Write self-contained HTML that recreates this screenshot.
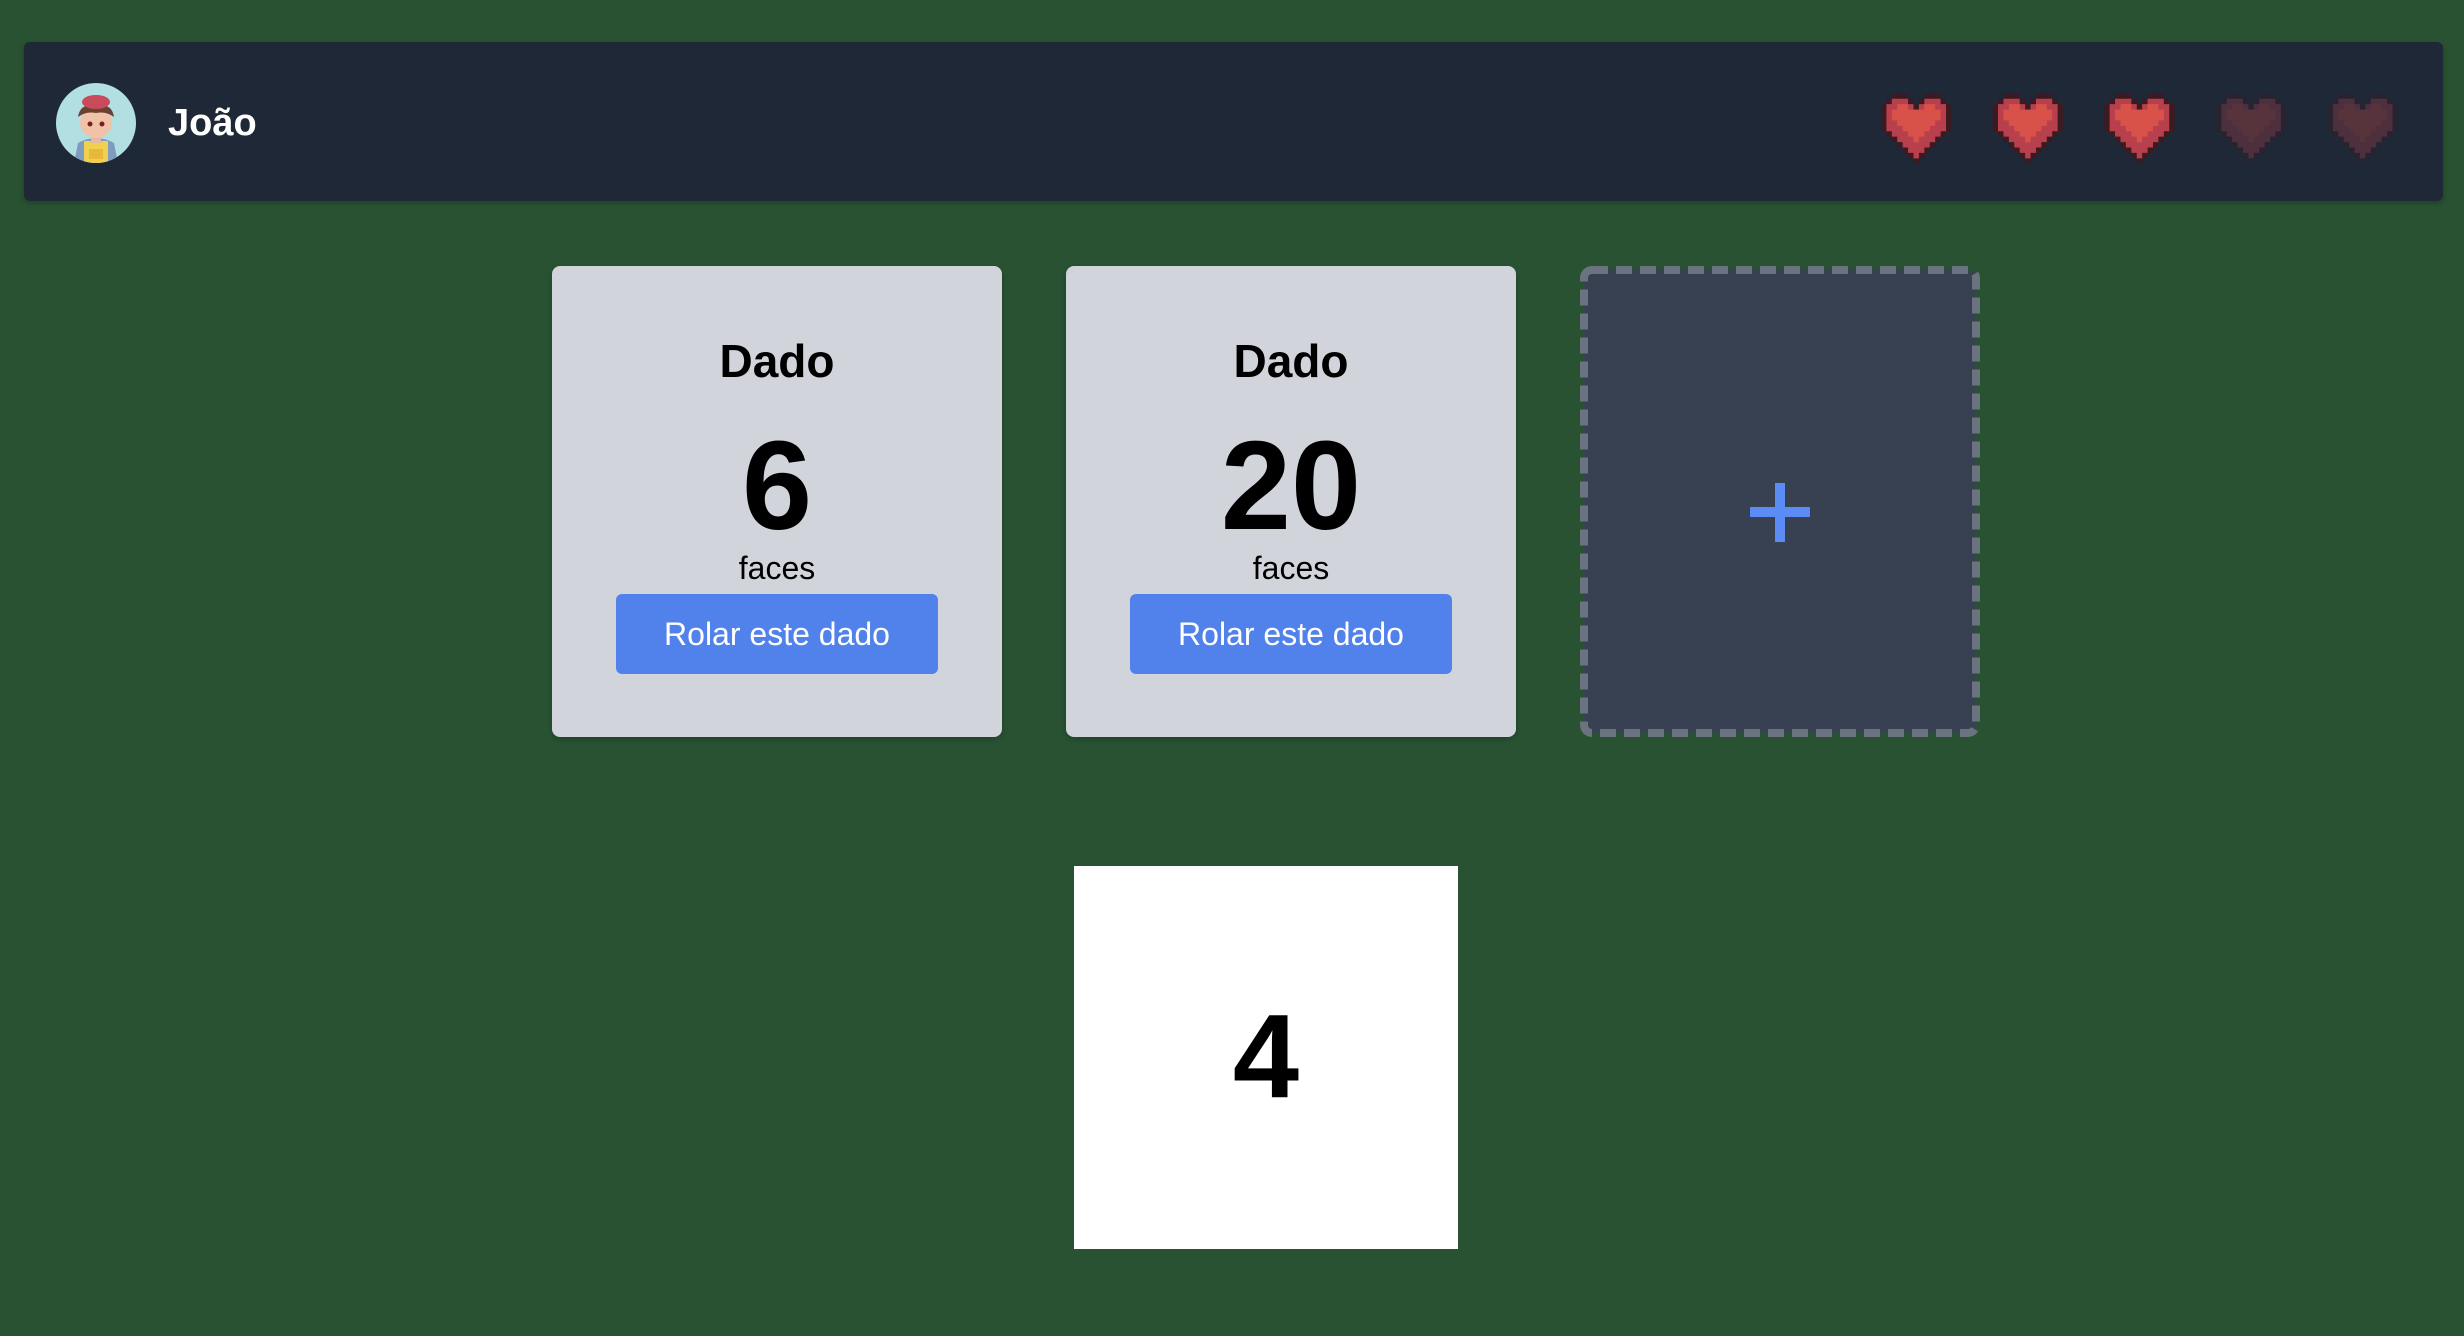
<!DOCTYPE html>
<html><head><meta charset="utf-8"><style>
html,body{margin:0;padding:0;}
body{width:2464px;height:1336px;background:#295233;position:relative;overflow:hidden;font-family:"Liberation Sans",Arial,sans-serif;}
.abs{position:absolute;}
.hdr{left:24px;top:42px;width:2419px;height:159px;background:#1f2837;border-radius:6px;box-shadow:0 2px 6px rgba(0,0,0,.25);}
.name{left:168px;top:98px;font-size:38px;font-weight:bold;color:#fff;line-height:50px;}
.card{top:266px;width:450px;height:471px;background:#d1d5db;border-radius:8px;box-shadow:0 2px 6px rgba(0,0,0,.2);}
.t{position:absolute;left:0;width:100%;text-align:center;color:#000;}
.dado{top:333px;font-size:46px;font-weight:bold;line-height:56px;}
.num{top:418px;font-size:126px;font-weight:bold;line-height:140px;}
.faces{top:548px;font-size:32px;line-height:40px;}
.btn{position:absolute;left:64px;top:328px;width:322px;height:80px;background:#5182ec;border-radius:6px;color:#fff;font-size:32px;line-height:80px;text-align:center;}
.res{left:1074px;top:866px;width:384px;height:383px;background:#fff;}
</style></head><body>
<div class="abs hdr"></div>
<svg class="abs" style="left:56px;top:83px" width="80" height="80" viewBox="0 0 80 80">
<defs><clipPath id="c"><circle cx="40" cy="40" r="40"/></clipPath></defs>
<g clip-path="url(#c)">
<rect width="80" height="80" fill="#b2dfe2"/>
<path d="M18 80 L22 60 Q40 50 58 60 L62 80Z" fill="#7d9cc0"/>
<rect x="28" y="58" width="24" height="24" fill="#f2d04f"/>
<rect x="33" y="66" width="14" height="10" fill="#e6b93a"/>
<rect x="35" y="50" width="10" height="10" fill="#e8b9a0"/>
<ellipse cx="40" cy="40" rx="16" ry="15" fill="#f0c2a8"/>
<path d="M22 34 Q24 20 40 22 Q56 20 58 34 Q50 28 40 30 Q30 28 22 34Z" fill="#6b3f32"/>
<ellipse cx="40" cy="19" rx="14" ry="7" fill="#c94a5a"/>
<circle cx="34" cy="41" r="2.5" fill="#7a1d1d"/><circle cx="46" cy="41" r="2.5" fill="#7a1d1d"/>
</g></svg>
<div class="abs name">João</div>

<svg class="abs" style="left:1881px;top:93px" width="557" height="70" viewBox="0 0 514 64">
<defs>
<g id="h">
<path d="M10 0h15v5h5v5h5v-5h5v-5h15v5h5v5h5v25h-5v5h-5v5h-5v5h-5v5h-5v5h-5v5h-5v-5h-5v-5h-5v-5h-5v-5h-5v-5h-5v-5h-5v-25h5v-5h5z" fill="#3b1a22"/>
<path d="M10 5h15v5h5v5h5v-5h5v-5h15v5h5v25h-5v5h-5v5h-5v5h-5v5h-5v5h-5v-5h-5v-5h-5v-5h-5v-5h-5v-5h-5v-25h5z" fill="#b8404c"/>
<path d="M15 10h10v5h15v-5h10v5h5v10h-5v5h-5v5h-5v5h-5v5h-5v-5h-5v-5h-5v-5h-5v-5h-5v-10h5z" fill="#d9524a"/>
</g></defs>
<use href="#h" x="0"/><use href="#h" x="103"/><use href="#h" x="206"/>
<use href="#h" x="309" opacity="0.3"/><use href="#h" x="412" opacity="0.3"/>
</svg>

<div class="abs card" style="left:552px">
<div class="t dado" style="top:67px">Dado</div>
<div class="t num" style="top:150px">6</div>
<div class="t faces" style="top:282px">faces</div>
<div class="btn">Rolar este dado</div>
</div>
<div class="abs card" style="left:1066px">
<div class="t dado" style="top:67px">Dado</div>
<div class="t num" style="top:150px">20</div>
<div class="t faces" style="top:282px">faces</div>
<div class="btn">Rolar este dado</div>
</div>

<svg class="abs" style="left:1580px;top:266px" width="400" height="471" viewBox="0 0 400 471">
<rect x="4" y="4" width="392" height="463" rx="8" fill="#384152" stroke="#6b7280" stroke-width="8" stroke-dasharray="16 8"/>
<rect x="170" y="241" width="60" height="10" fill="#5b8cf5"/>
<rect x="195" y="217" width="10" height="59" fill="#5b8cf5"/>
</svg>

<div class="abs res"><div class="t" style="top:121px;font-size:119px;font-weight:bold;line-height:140px;">4</div></div>
</body></html>
